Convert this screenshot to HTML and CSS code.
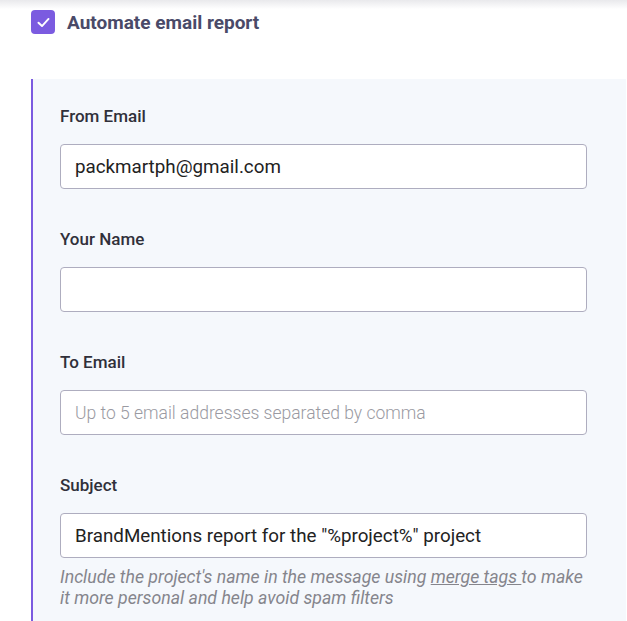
FILE: index.html
```html
<!DOCTYPE html>
<html lang="en">
<head>
    <meta charset="UTF-8">
    <meta name="viewport" content="width=device-width, initial-scale=1.0">
    <title>Automate email report</title>
    <link rel="stylesheet" href="styles.css">
</head>
<body>
<div class="topshade"></div>
<label class="toggle">
    <span class="checkbox">
        <svg width="15" height="15" viewBox="0 0 14 14"><path d="M2.3 7.2 L5.6 10.3 L11.7 3.7" fill="none" stroke="#fff" stroke-width="1.8" stroke-linecap="round" stroke-linejoin="round"/></svg>
    </span>
    <span class="toggle-title">Automate email report</span>
</label>

<div class="panel">
    <div class="field">
        <div class="label">From Email</div>
        <input class="input" type="text" value="packmartph@gmail.com">
    </div>
    <div class="field">
        <div class="label">Your Name</div>
        <input class="input" type="text" value="">
    </div>
    <div class="field">
        <div class="label">To Email</div>
        <input class="input" type="text" placeholder="Up to 5 email addresses separated by comma">
    </div>
    <div class="field">
        <div class="label">Subject</div>
        <input class="input" type="text" value="BrandMentions report for the &quot;%project%&quot; project">
        <p class="hint">Include the project's name in the message using <a href="#">merge tags </a>to make it more personal and help avoid spam filters</p>
    </div>
</div>
</body>
</html>
```

FILE: styles.css
```css
body {
    margin: 0;
    font-family: Roboto, "Liberation Sans", sans-serif;
    background-color: #fff;
    overflow: hidden;
}
.topshade {
    height: 9px;
    background: linear-gradient(#e9e9ec, #fff);
}
.toggle {
    display: flex;
    align-items: center;
    gap: 12px;
    margin-left: 31px;
    height: 30px;
    margin-top: -2px;
}
.checkbox {
    width: 24px;
    height: 24px;
    border-radius: 4px;
    background-color: #7b5be0;
    display: flex;
    justify-content: center;
    align-items: center;
}
.toggle-title {
    font-size: 19px;
    font-weight: bold;
    color: #4a4a68;
}
.panel {
    margin-top: 42px;
    margin-left: 31px;
    margin-right: 1px;
    border-left: 2px solid #7b5be0;
    background-color: #f5f8fc;
    padding: 25px 39px 30px 27px;
}
.field {
    margin-bottom: 38px;
}
.label {
    font-size: 17px;
    font-weight: 500;
    line-height: 24px;
    color: #30303a;
    margin-bottom: 16px;
}
.input {
    display: block;
    box-sizing: border-box;
    width: 100%;
    height: 45px;
    padding: 0 14px;
    border: 1px solid #aeadbf;
    border-radius: 4px;
    background-color: #fff;
    font-family: Roboto, "Liberation Sans", sans-serif;
    font-size: 18.8px;
    color: #222;
    outline: none;
}
.input::placeholder {
    font-size: 17.5px;
    font-weight: 300;
    color: #9a9aa2;
}
.hint {
    margin: 9px 0 0;
    font-size: 17.7px;
    font-style: italic;
    line-height: 21px;
    color: #85858c;
}
.hint a {
    color: #85858c;
}
```
